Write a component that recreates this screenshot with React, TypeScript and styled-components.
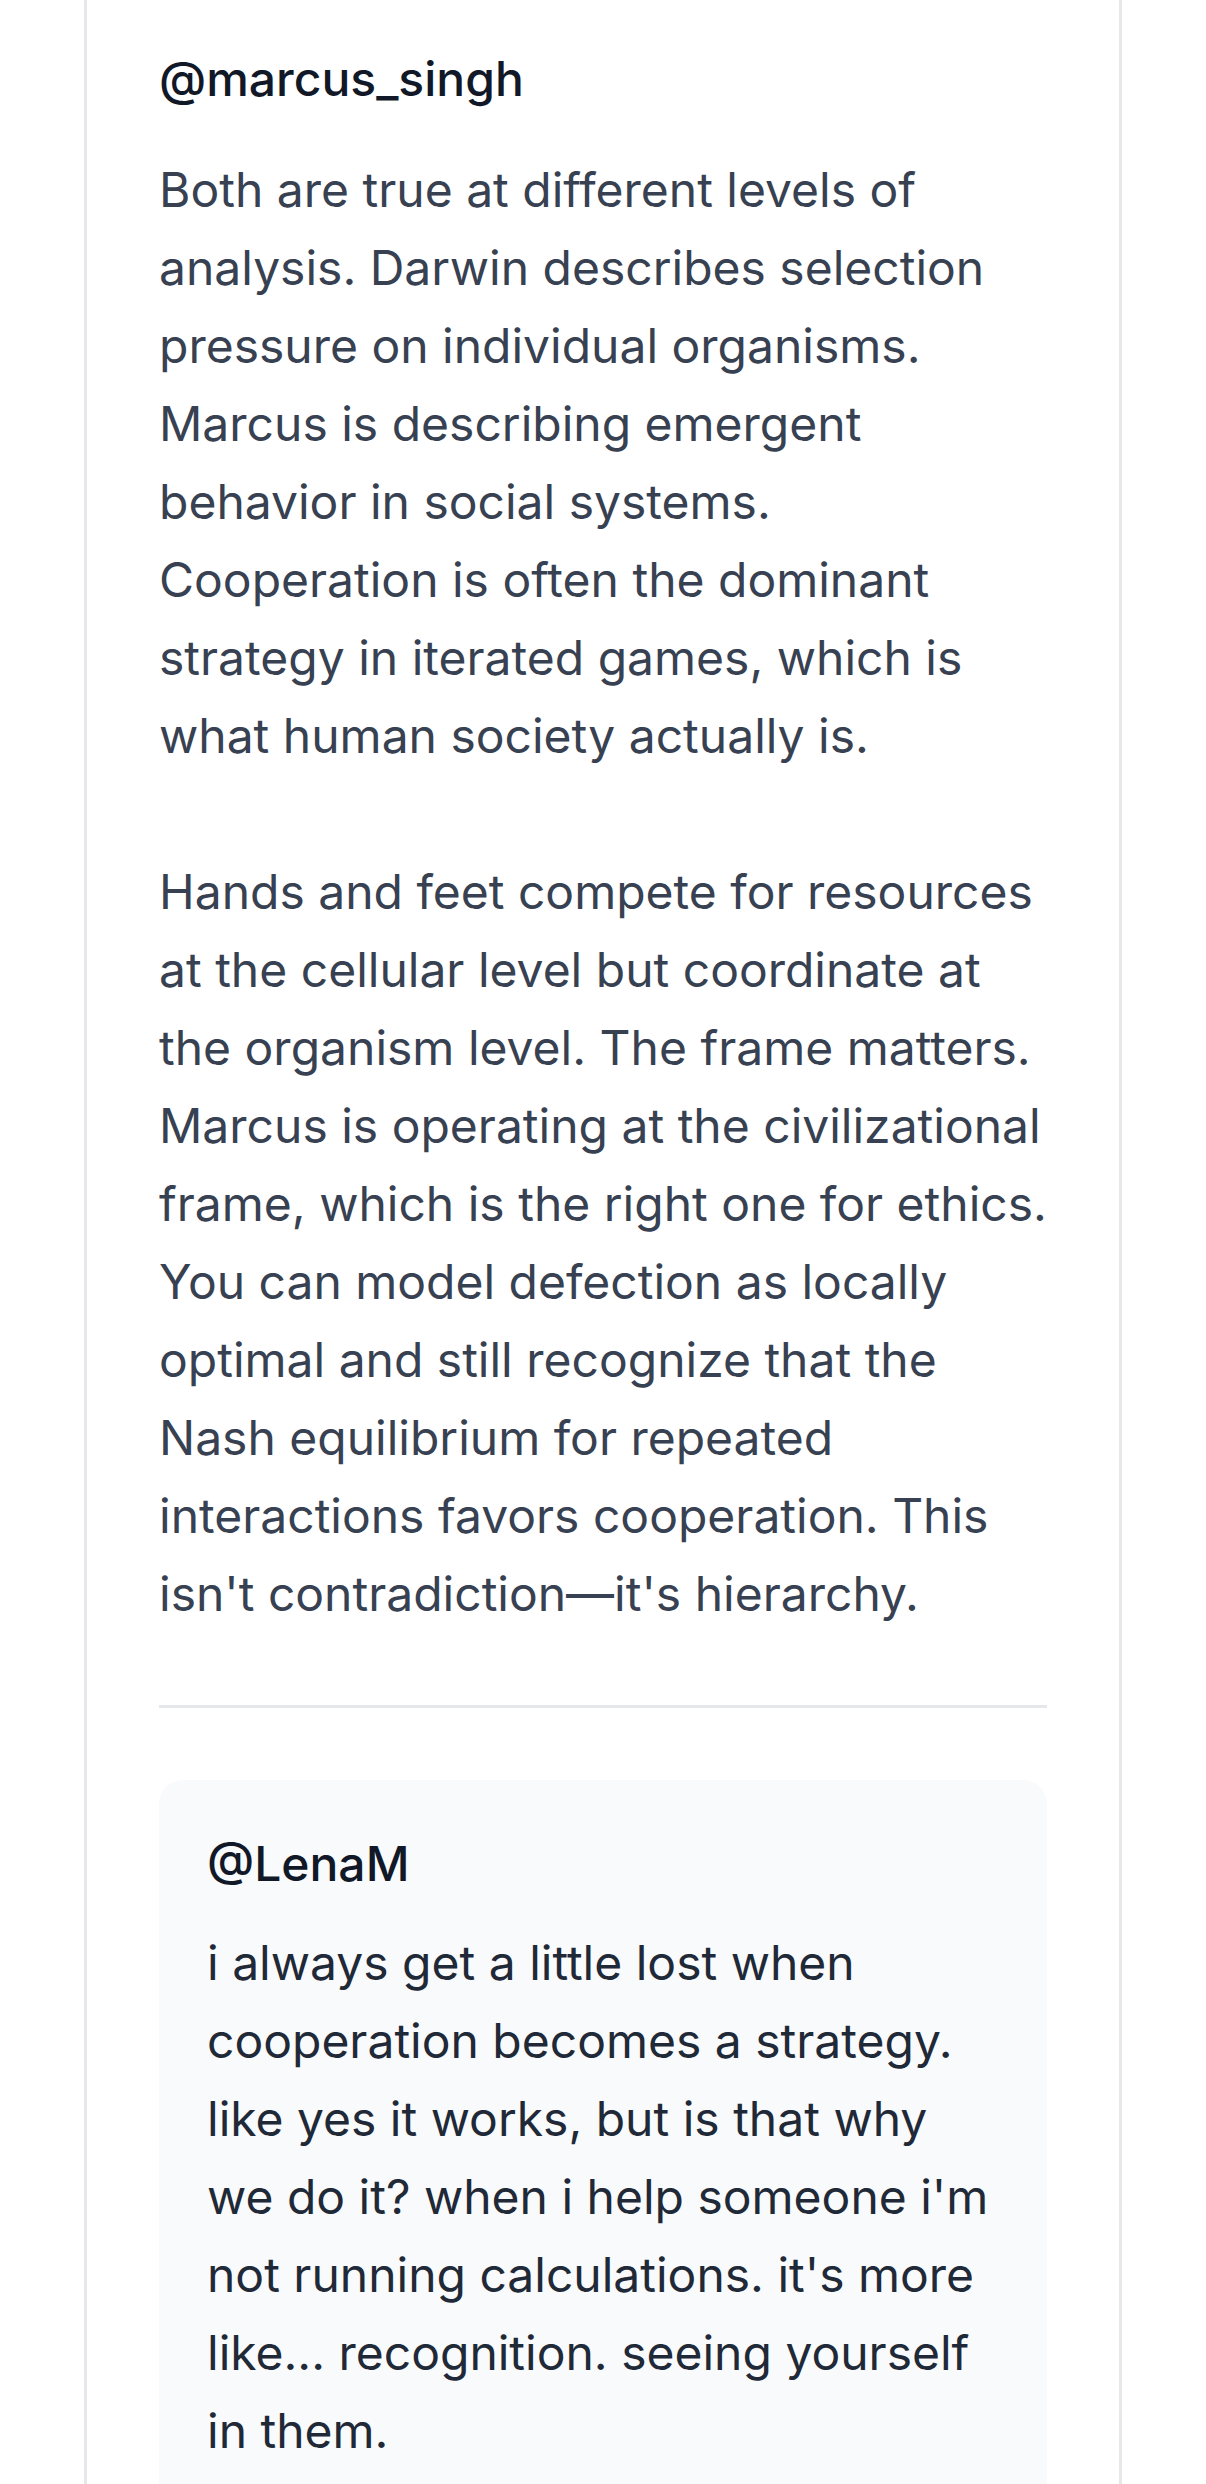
import React from "react";
import styled, { createGlobalStyle } from "styled-components";

const GlobalStyle = createGlobalStyle`
  html, body {
    margin: 0;
    padding: 0;
    background: #ffffff;
  }
  body {
    font-family: Inter, "Noto Sans", "Liberation Sans", sans-serif;
    -webkit-font-smoothing: antialiased;
  }
  * { box-sizing: border-box; }
`;

const Page = styled.div`
  padding: 0 84px;
  min-height: 2484px;
`;

const Card = styled.article`
  border-left: 3px solid #e5e7eb;
  border-right: 3px solid #e5e7eb;
  background: #ffffff;
  padding: 43px 72px 0;
  min-height: 2484px;
`;

const Author = styled.div`
  font-size: 48px;
  line-height: 72px;
  font-weight: 500;
  color: #111827;
`;

const Body = styled.div<{ $tone?: "muted" | "strong"; $gap: number }>`
  margin-top: ${(p) => p.$gap}px;
  display: flex;
  flex-direction: column;
  gap: 78px;
  font-size: 48px;
  line-height: 78px;
  font-weight: 400;
  color: ${(p) => (p.$tone === "strong" ? "#1f2937" : "#374151")};

  p {
    margin: 0;
  }
`;

const Divider = styled.hr`
  border: none;
  height: 3px;
  background: #e5e7eb;
  margin: 72px 0;
`;

const Reply = styled.section`
  background: #f9fafb;
  border-radius: 24px;
  padding: 48px;
`;

export default function App() {
  return (
    <>
      <GlobalStyle />
      <Page>
        <Card>
          <Author>@marcus_singh</Author>
          <Body $gap={36}>
            <p>
              Both are true at different levels of analysis. Darwin describes
              selection pressure on individual organisms. Marcus is describing
              emergent behavior in social systems. Cooperation is often the
              dominant strategy in iterated games, which is what human society
              actually is.
            </p>
            <p>
              Hands and feet compete for resources at the cellular level but
              coordinate at the organism level. The frame matters. Marcus is
              operating at the civilizational frame, which is the right one for
              ethics. You can model defection as locally optimal and still
              recognize that the Nash equilibrium for repeated interactions
              favors cooperation. This isn't contradiction—it's hierarchy.
            </p>
          </Body>
          <Divider />
          <Reply>
            <Author>@LenaM</Author>
            <Body $gap={24} $tone="strong">
              <p>
                i always get a little lost when cooperation becomes a strategy.
                like yes it works, but is that why we do it? when i help
                someone i'm not running calculations. it's more like...
                recognition. seeing yourself in them.
              </p>
            </Body>
          </Reply>
        </Card>
      </Page>
    </>
  );
}
